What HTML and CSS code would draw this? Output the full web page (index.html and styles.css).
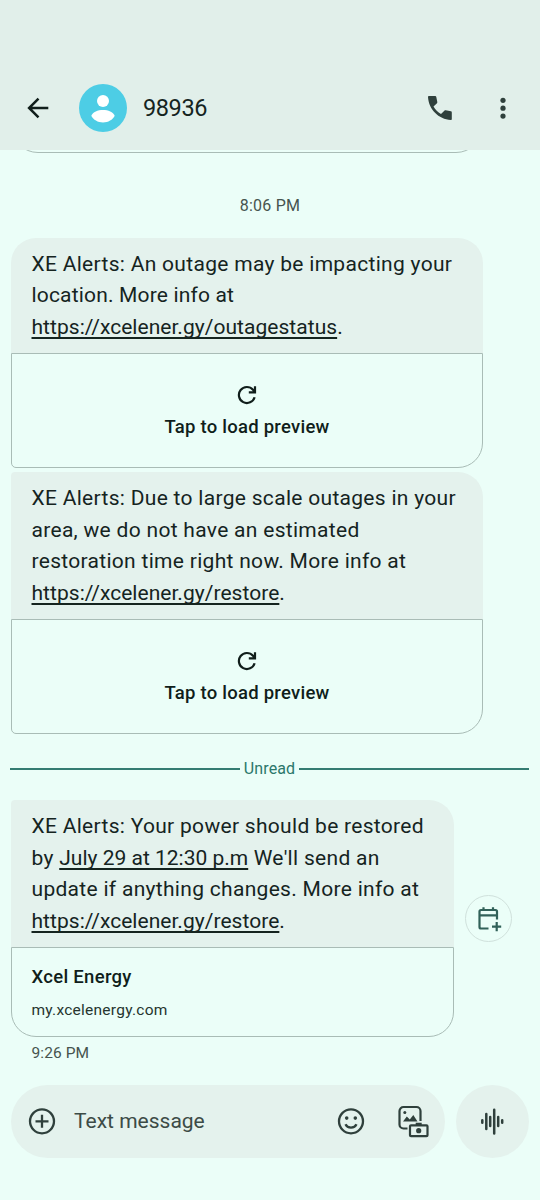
FILE: index.html
```html
<!DOCTYPE html>
<html lang="en">
<head>
<meta charset="utf-8">
<title>98936</title>
<link rel="stylesheet" href="styles.css">
</head>
<body>
<div class="screen">
  <header class="bar">
    <svg class="back" width="24" height="24" viewBox="0 0 24 24" fill="none" stroke="#101e1b" stroke-width="2.500"><path d="M22.300 12H3.200M12.500 2.600 3.100 12l9.400 9.400"/></svg>
    <svg class="avatar" width="48" height="48" viewBox="0 0 48 48"><circle cx="24" cy="24" r="24" fill="#4dcde5"/><circle cx="24" cy="17" r="6" fill="#fff"/><path d="M12.300 31.800c1.500-4 6.500-5.800 11.700-5.800s10.200 1.800 11.700 5.800c-2 4-6.500 6.700-11.700 6.700s-9.700-2.700-11.700-6.700z" fill="#fff"/></svg>
    <h1 class="name">98936</h1>
    <svg class="phone" width="24" height="24" viewBox="0 0 24 24" fill="#2f403c"><path d="M.8 0h6.400c.6 0 1 .3 1.100.9l1 5.200c.1.400 0 .8-.3 1.100L5.500 10.600c1.800 3.200 4.300 5.600 7.500 7.500l3.600-3.600c.3-.3.700-.4 1.100-.3l5.200 1.100c.6.100.9.500.9 1.100v6.600c0 .6-.4 1-1 1C10.500 23.300.7 13.300 0 1 0 .4.300 0 .8 0z"/></svg>
    <svg class="more" width="8" height="24" viewBox="0 0 8 24" fill="#2f403c"><circle cx="4" cy="4.300" r="2.600"/><circle cx="4" cy="12.200" r="2.600"/><circle cx="4" cy="20.100" r="2.600"/></svg>
  </header>
  <main class="thread">
    <div class="earlier"><div class="earlier-card"></div></div>
    <p class="stamp">8:06 PM</p>
    <section class="message">
      <div class="bubble">
        <p class="line">XE Alerts: An outage may be impacting your</p>
        <p class="line snug">location. More info at</p>
        <p class="line tight"><span class="link">https://xcelener.gy/outagestatus</span>.</p>
      </div>
      <div class="preview">
        <svg width="20" height="20" viewBox="0 0 20 20" fill="none" stroke="#101e1b" stroke-width="2.200"><path d="M17.600 12.200A8 8 0 1 1 16 4.800l1.800 2.200M18 1.200v6.200h-6.200"/></svg>
        <span class="tap">Tap to load preview</span>
      </div>
    </section>
    <section class="message second">
      <div class="bubble">
        <p class="line">XE Alerts: Due to large scale outages in your</p>
        <p class="line">area, we do not have an estimated</p>
        <p class="line">restoration time right now. More info at</p>
        <p class="line tight"><span class="link">https://xcelener.gy/restore</span>.</p>
      </div>
      <div class="preview">
        <svg width="20" height="20" viewBox="0 0 20 20" fill="none" stroke="#101e1b" stroke-width="2.200"><path d="M17.600 12.200A8 8 0 1 1 16 4.800l1.800 2.200M18 1.200v6.200h-6.200"/></svg>
        <span class="tap">Tap to load preview</span>
      </div>
    </section>
    <div class="unread"><span class="unread-label">Unread</span></div>
    <div class="row">
      <section class="message last">
        <div class="bubble">
          <p class="line">XE Alerts: Your power should be restored</p>
          <p class="line">by <span class="link date">July 29 at 12:30 p.m</span> We'll send an</p>
          <p class="line">update if anything changes. More info at</p>
          <p class="line tight"><span class="link">https://xcelener.gy/restore</span>.</p>
        </div>
        <div class="site">
          <span class="site-name">Xcel Energy</span>
          <span class="site-url">my.xcelenergy.com</span>
        </div>
      </section>
      <div class="calendar">
        <svg width="26" height="28" viewBox="0 0 26 28" fill="none" stroke="#316159" stroke-width="2.200"><path d="M12.500 23.500H5a1.500 1.500 0 0 1-1.500-1.500V6.500a1.500 1.500 0 0 1 1.500-1.500h14.500a1.500 1.500 0 0 1 1.500 1.500V14.500M3.500 10.300h17.500M7.500 2.300v3M17 2.300v3M20.700 17v9.200M16 21.600h9.200"/></svg>
      </div>
    </div>
    <p class="sent">9:26 PM</p>
  </main>
  <footer class="composer">
    <div class="field">
      <svg class="plus" width="28" height="28" viewBox="0 0 28 28" fill="none" stroke="#2f403c" stroke-width="2.300"><circle cx="14" cy="13.300" r="12"/><path d="M14 6.800v13M7.500 13.300h13"/></svg>
      <span class="hint">Text message</span>
      <svg class="smile" width="28" height="28" viewBox="0 0 28 28" fill="none" stroke="#2f403c" stroke-width="2.300"><circle cx="14" cy="13.300" r="12"/><path d="M8.500 16.300c1 2.200 3 3.300 5.500 3.300s4.500-1.100 5.500-3.300"/><circle cx="9.700" cy="10.100" r="1.800" fill="#2f403c" stroke="none"/><circle cx="18.300" cy="10.100" r="1.800" fill="#2f403c" stroke="none"/></svg>
      <svg class="gallery" width="32" height="34" viewBox="0 0 32 34" fill="none" stroke="#2f403c" stroke-width="2.200"><path d="M10.500 23.500H6.500A4 4 0 0 1 2.500 19.500V6A4 4 0 0 1 6.500 2H19.500A4 4 0 0 1 23.500 6v10"/><circle cx="7.800" cy="7.500" r="1.500" fill="#2f403c" stroke="none"/><path d="M6 16.500 9.800 11.500l3 3 3.500-4.500 4.200 6.500z" fill="#2f403c" stroke="none"/><path d="M14 20.300h15.500a1 1 0 0 1 1 1v8.900a1 1 0 0 1-1 1H14a1 1 0 0 1-1-1v-8.900a1 1 0 0 1 1-1zM18.700 18.800h6"/><circle cx="21.700" cy="25.700" r="2.600" fill="#2f403c" stroke="none"/></svg>
    </div>
    <div class="voice">
      <svg width="26" height="28" viewBox="0 0 26 28" fill="none" stroke="#2f403c" stroke-width="2.500" stroke-linecap="round"><path d="M2.300 12.300v2.400M6.300 6v15M10.200 9v9M14.200 1.800v23.800M18.200 9v9M22.200 12.300v2.400"/></svg>
    </div>
  </footer>
</div>
</body>
</html>
```
FILE: styles.css
```css
* { box-sizing: border-box; }
body { margin: 0; background: #ebfef8; font-family: Roboto, "Noto Sans", sans-serif; color: #15241f; }
p, h1 { margin: 0; font-weight: 400; }
svg { display: block; flex: none; overflow: visible; }
.screen { width: 540px; height: 1200px; display: flex; flex-direction: column; overflow: hidden; }
.bar { height: 150px; flex: none; background: #e1efea; padding: 66px 33px 0 26px; display: flex; align-items: center; }
.avatar { margin-left: 29px; }
.name { margin-left: 16px; font-size: 23.500px; line-height: 30px; letter-spacing: -0.400px; flex: 1; }
.more { margin-left: 47px; }
.thread { padding: 0 11px; }
.earlier { height: 3px; overflow: hidden; display: flex; align-items: flex-end; }
.earlier-card { width: 472px; height: 60px; flex: none; border: 1.500px solid #a9bcb6; border-radius: 27px; }
.stamp { margin-top: 43px; text-align: center; font-size: 16px; line-height: 20px; letter-spacing: .2px; color: #46544f; height: 41.500px; }
.message { width: 472px; }
.second { margin-top: 4px; }
.bubble { background: #e4f2ed; border-radius: 25px 25px 0 0; padding: 11px 20.500px 0; height: 115.500px; }
.second .bubble { height: 147px; border-top-left-radius: 4px; }
.last .bubble { height: 147px; border-top-left-radius: 4px; }
.line { font-size: 21px; line-height: 31.500px; height: 31.500px; white-space: nowrap; letter-spacing: .3px; }
.snug { letter-spacing: .17px; }
.tight { letter-spacing: .04px; }
.link { text-decoration: underline; text-decoration-thickness: 1.500px; text-underline-offset: 3px; text-decoration-skip-ink: none; }
.date { letter-spacing: 0; }
.preview { height: 115px; border: 1.500px solid #a9bcb6; border-radius: 0 0 25px 5px; display: flex; flex-direction: column; align-items: center; padding-top: 31px; color: #101e1b; }
.tap { font-size: 18.500px; font-weight: 500; line-height: 24px; margin-top: 10px; letter-spacing: .25px; }
.unread { display: flex; align-items: center; gap: 4px; height: 20px; margin: 25px 0 0 -1px; color: #2c776b; }
.unread::before, .unread::after { content: ""; flex: 1; height: 2px; background: #347c72; }
.unread-label { font-size: 16px; line-height: 20px; letter-spacing: .1px; }
.row { display: flex; align-items: flex-start; gap: 11px; margin-top: 21px; }
.last { width: 443px; flex: none; }
.site { height: 90px; border: 1.500px solid #a9bcb6; border-radius: 0 0 25px 25px; padding: 17px 19.500px 0; display: flex; flex-direction: column; }
.site-name { font-size: 18.500px; font-weight: 500; line-height: 24px; letter-spacing: .3px; color: #101e1b; }
.site-url { font-size: 15.500px; line-height: 20px; letter-spacing: .25px; margin-top: 11px; color: #26352f; }
.calendar { width: 47px; height: 47px; margin-top: 95px; border: 1.500px solid #d0e1dc; border-radius: 50%; display: flex; align-items: center; justify-content: center; }
.sent { margin: 6px 0 0 20.500px; height: 20px; font-size: 15.500px; line-height: 20px; letter-spacing: .1px; color: #46544f; }
.composer { display: flex; gap: 11px; padding: 0 11px; margin-top: auto; margin-bottom: 42px; }
.field { width: 434px; height: 73px; border-radius: 37px; background: #e4f2ed; display: flex; align-items: center; padding: 0 16px 0 17px; }
.hint { margin-left: 18px; flex: 1; font-size: 21px; line-height: 28px; padding-bottom: 2px; color: #3c4b46; }
.gallery { margin-left: 32px; }
.voice { width: 73px; height: 73px; border-radius: 50%; background: #e4f2ed; display: flex; align-items: center; justify-content: center; }
```
